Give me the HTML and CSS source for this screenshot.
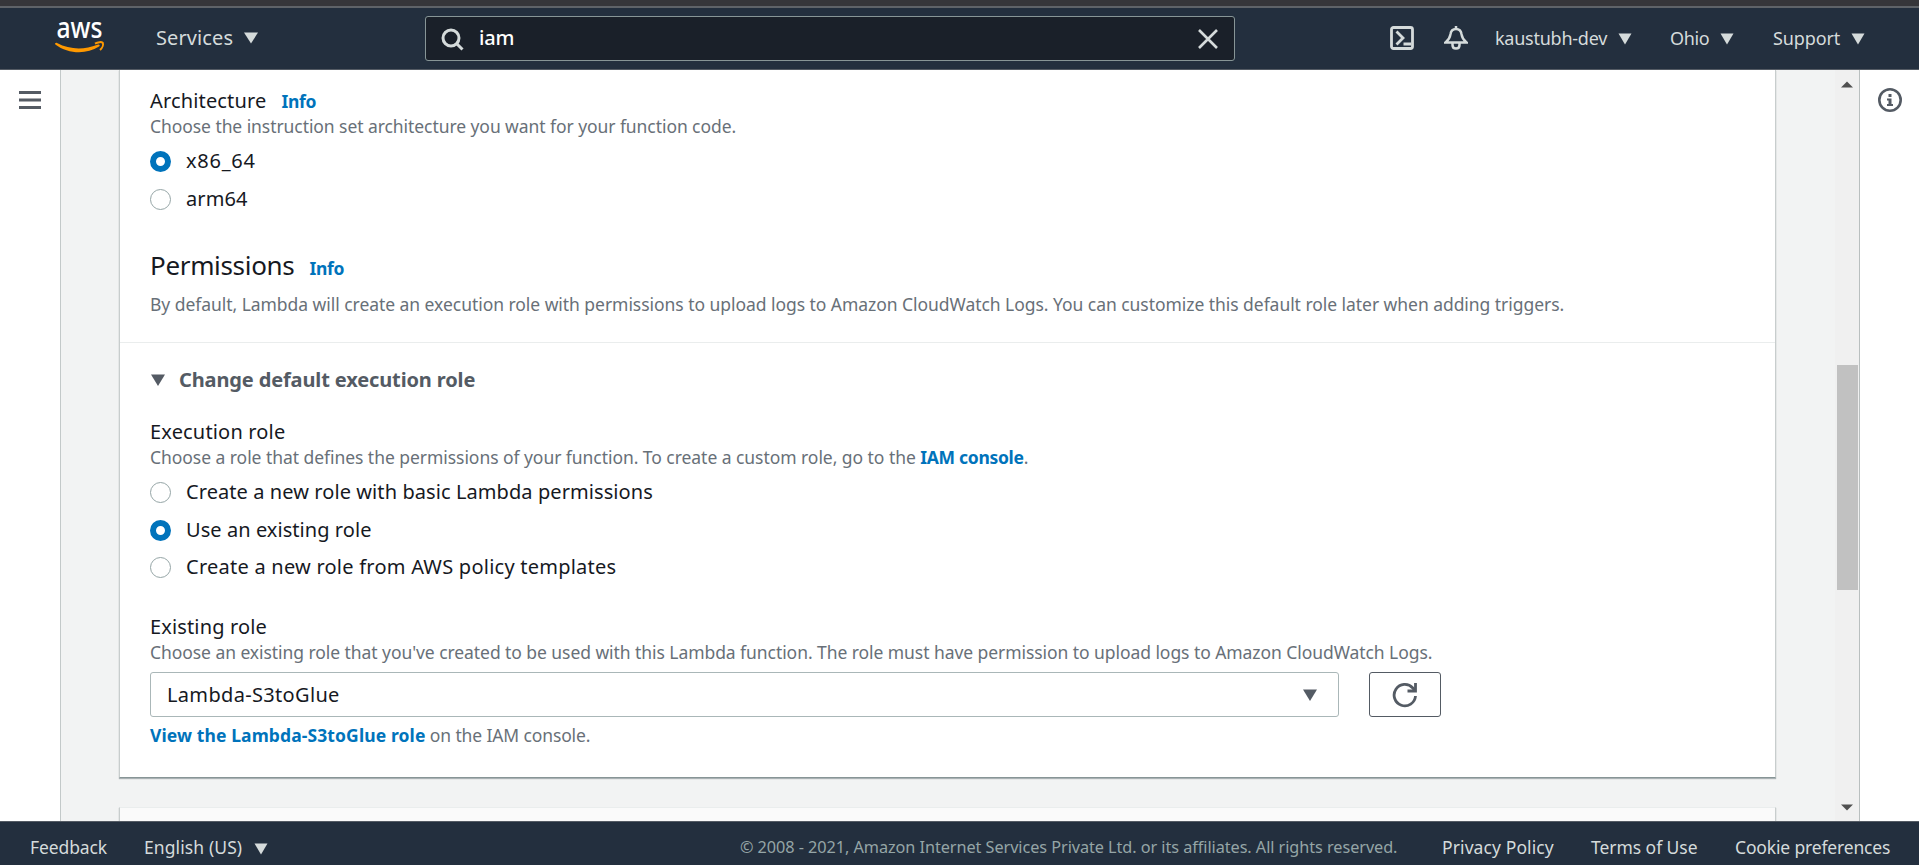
FILE: index.html
```html
<!DOCTYPE html>
<html lang="en">
<head>
<meta charset="utf-8">
<title>Create function - Lambda</title>
<link rel="stylesheet" href="styles.css">
</head>
<body>
<div class="app">
  <div class="browser-edge"></div>
  <header class="topbar">
    <svg class="logo" width="52" height="40" viewBox="0 0 52 40">
      <text class="logo-text" x="2.5" y="20" textLength="46" lengthAdjust="spacingAndGlyphs">aws</text>
      <path class="smile" d="M1 25.500C1.500 24.800 2.300 24.600 3 25C16 31.800 30 32 43.500 26.700C45.500 26 46.500 27.600 45 28.600C32 37 14 36 1.300 26.500Z"/>
      <path class="smile-tip" d="M41 25.600C44 23.800 47.500 23.800 48.800 24.800C49.500 26.500 48.500 29.800 46 32"/>
    </svg>
    <a class="services"><span class="t-services">Services</span><svg class="caret-services" width="16" height="12" viewBox="0 0 16 12"><path d="M1 0.500H15L8 11.500Z"/></svg></a>
    <div class="search">
      <svg class="search-icon" width="24" height="24" viewBox="0 0 24 24"><circle cx="10" cy="10" r="8" /><path d="M15.500 15.500L21.500 21.500"/></svg>
      <span class="t-query">iam</span>
      <svg class="clear-icon" width="20" height="20" viewBox="0 0 20 20"><path d="M1 1L19 19M19 1L1 19"/></svg>
    </div>
    <nav class="account">
      <svg class="line-icon shell-icon" width="24" height="24" viewBox="0 0 24 24"><rect x="1.500" y="1.500" width="21" height="21" rx="2"/><path d="M6.500 5.500L13 12L6.500 18.500M13.500 18H21"/></svg>
      <svg class="line-icon bell-icon" width="24" height="24" viewBox="0 0 24 24"><path d="M12 0V3M1.500 16.500C6 13 6 11 6.500 8C7 4.500 9 3 12 3S17 4.500 17.500 8C18 11 18 13 22.500 16.500Z"/><path d="M8.500 17V19C8.500 23.800 15.500 23.800 15.500 19V17"/></svg>
      <span class="t-user">kaustubh-dev</span><svg class="caret-nav" width="14" height="12" viewBox="0 0 14 12"><path d="M0.500 0.500H13.500L7 11.500Z"/></svg>
      <span class="t-region">Ohio</span><svg class="caret-nav" width="14" height="12" viewBox="0 0 14 12"><path d="M0.500 0.500H13.500L7 11.500Z"/></svg>
      <span class="t-support">Support</span><svg class="caret-nav" width="14" height="12" viewBox="0 0 14 12"><path d="M0.500 0.500H13.500L7 11.500Z"/></svg>
    </nav>
  </header>

  <div class="body">
    <aside class="left-rail">
      <svg width="22" height="18" viewBox="0 0 22 18"><path d="M0 1.500H22M0 9H22M0 16.500H22"/></svg>
    </aside>
    <main class="content">
      <section class="card">
        <div class="permissions">
          <div class="label"><span class="t-arch">Architecture</span><a class="info">Info</a></div>
          <div class="hint"><span class="t-arch-hint">Choose the instruction set architecture you want for your function code.</span></div>
          <div class="radios">
            <div class="option"><i class="radio on"></i><span class="t-x86">x86_64</span></div>
            <div class="option"><i class="radio"></i><span class="t-arm">arm64</span></div>
          </div>
          <h2><span class="t-perm">Permissions</span><a class="info">Info</a></h2>
          <div class="hint"><span class="t-perm-hint">By default, Lambda will create an execution role with permissions to upload logs to Amazon CloudWatch Logs. You can customize this default role later when adding triggers.</span></div>
        </div>
        <div class="role">
          <div class="expander"><svg width="16" height="13" viewBox="0 0 16 13"><path d="M1 0.500H15L8 12Z"/></svg><span class="t-change">Change default execution role</span></div>
          <div class="label"><span class="t-exec">Execution role</span></div>
          <div class="hint"><span class="t-exec-hint">Choose a role that defines the permissions of your function. To create a custom role, go to the </span><a class="t-iam">IAM console</a>.</div>
          <div class="radios">
            <div class="option"><i class="radio"></i><span class="t-opt1">Create a new role with basic Lambda permissions</span></div>
            <div class="option"><i class="radio on"></i><span class="t-opt2">Use an existing role</span></div>
            <div class="option"><i class="radio"></i><span class="t-opt3">Create a new role from AWS policy templates</span></div>
          </div>
          <div class="label existing"><span class="t-exist">Existing role</span></div>
          <div class="hint"><span class="t-exist-hint">Choose an existing role that you've created to be used with this Lambda function. The role must have permission to upload logs to Amazon CloudWatch Logs.</span></div>
          <div class="picker">
            <div class="select"><span class="t-select">Lambda-S3toGlue</span><svg width="16" height="13" viewBox="0 0 16 13"><path d="M1 0.500H15L8 12Z"/></svg></div>
            <div class="refresh"><svg width="26" height="26" viewBox="0 0 26 26"><path d="M23.500 14A10.700 10.700 0 1 1 20.800 6L23 8.500"/><path d="M23.500 1V9H15.500"/></svg></div>
          </div>
          <div class="hint"><a class="t-view">View the Lambda-S3toGlue role</a><span class="t-view-rest"> on the IAM console.</span></div>
        </div>
      </section>
      <section class="card next-card"></section>
    </main>
    <div class="scrollbar">
      <svg width="12" height="7" viewBox="0 0 12 7"><path d="M6 0.500L12 6.500H0Z"/></svg>
      <div class="thumb"></div>
      <svg class="down" width="12" height="7" viewBox="0 0 12 7"><path d="M0 0.500H12L6 6.500Z"/></svg>
    </div>
    <aside class="right-rail">
      <svg width="24" height="24" viewBox="0 0 24 24"><circle cx="12" cy="12" r="10.700"/><path d="M10.500 6h3v3h-3zM9 10.500h4.500v5.500h1.500v2h-6v-2h1.500v-3.500h-1.500z"/></svg>
    </aside>
  </div>

  <footer class="footer">
    <a class="t-feedback">Feedback</a>
    <a class="t-lang">English (US)</a>
    <svg class="caret-lang" width="14" height="12" viewBox="0 0 14 12"><path d="M0.500 0.500H13.500L7 11.500Z"/></svg>
    <span class="t-copy">© 2008 - 2021, Amazon Internet Services Private Ltd. or its affiliates. All rights reserved.</span>
    <a class="t-privacy">Privacy Policy</a>
    <a class="t-terms">Terms of Use</a>
    <a class="t-cookie">Cookie preferences</a>
  </footer>
</div>
</body>
</html>
```
FILE: styles.css
```css
* { box-sizing: border-box; }
body { margin: 0; font-family: "Noto Sans", sans-serif; font-size: 20px; color: #16191f; overflow: hidden; }
svg { display: block; flex: none; }
span, a { white-space: pre; }
.app { width: 1919px; height: 865px; display: flex; flex-direction: column; overflow: hidden; }

.browser-edge { height: 8px; flex: none; background: #36363a; border-bottom: 2px solid #5f6368; }

/* top bar */
.topbar { height: 62px; flex: none; display: flex; background: #232f3e; border-bottom: 1px solid #545b64; color: #d5dbdb; line-height: 30px; padding-left: 54px; }
.logo { margin-top: 10px; overflow: visible; }
.logo-text { font-family: "Noto Sans", sans-serif; font-size: 28.5px; font-weight: 500; fill: #fff; }
.services { display: flex; margin: 15px 0 0 50px; width: 269px; font-size: 20px; }
.t-services { width: 87px; letter-spacing: 0.1px; }
.topbar svg path { fill: #d5dbdb; }
.topbar .logo .smile { fill: #f90; }
.topbar .logo .smile-tip { fill: none; stroke: #f90; stroke-width: 2; }
.caret-services { margin-top: 9px; }
.search { display: flex; margin-top: 8px; width: 810px; height: 45px; background: #1a2029; border: 1px solid #879596; border-radius: 3px; padding-left: 15px; color: #fff; }
.topbar .search-icon, .topbar .clear-icon { fill: none; stroke: #d5dbdb; stroke-width: 3; }
.topbar .clear-icon path { stroke-width: 2.6; }
.search-icon { margin-top: 11px; }
.t-query { margin: 6px 0 0 14px; font-weight: 500; letter-spacing: -0.2px; }
.clear-icon { margin: 12px 16px 0 auto; }
.account { display: flex; font-size: 18px; margin: 15px 0 0 155px; }
.topbar .line-icon path { fill: none; }
.line-icon { fill: none; stroke: #d5dbdb; stroke-width: 2.8; margin-top: 3px; }
.bell-icon { margin: 3px 27px 0 30px; stroke-width: 2.5; }
.caret-nav { margin-top: 10px; }
.t-user { width: 123px; letter-spacing: -0.25px; }
.t-region { width: 50px; margin-left: 38px; letter-spacing: -0.4px; }
.t-support { width: 78px; margin-left: 39px; letter-spacing: -0.1px; }

/* workspace */
.body { flex: 1; min-height: 0; display: flex; }
.left-rail { width: 61px; flex: none; padding: 21px 0 0 19px; border-right: 1px solid #c3c9c9; background: #fff; }
.left-rail path { stroke: #545b64; stroke-width: 3; }
.content { width: 1774px; flex: none; background: #f2f3f3; padding: 0 60px 0 58px; overflow: hidden; }
.card { background: #fff; border: 1px solid #c8cdcd; border-top: 0; border-bottom: 1px solid #879596; width: 1657px; box-shadow: 0 1px 1px rgba(0, 28, 36, 0.3); }
.permissions { height: 273px; padding: 16px 29px 0 30px; border-bottom: 1px solid #eaeded; }
.role { height: 434px; padding: 22px 29px 0 30px; }
.next-card { margin-top: 29px; height: 40px; background: #fafafa; border-top: 1px solid #eaeded; }
.label { line-height: 30px; display: flex; }
.info { font-size: 17.500px; font-weight: 700; color: #0073bb; margin-left: 15px; letter-spacing: -0.3px; }
.hint { font-size: 17.500px; line-height: 22px; color: #687078; display: flex; margin-top: -1px; }
.hint a { font-weight: 700; color: #0073bb; }
.radios { margin-top: 9px; display: flex; flex-direction: column; gap: 7.500px; }
.option { display: flex; line-height: 30px; }
.radio { width: 21px; height: 21px; margin: 5px 15px 0 0; border-radius: 50%; border: 1px solid #95a5a6; }
.radio.on { border: 6px solid #0073bb; }
h2 { margin: 33px 0 8px; font-size: 26px; font-weight: 400; line-height: 36px; display: flex; }
h2 .info { padding-top: 3px; }
.expander { display: flex; line-height: 30px; font-weight: 700; color: #545b64; margin-bottom: 22px; }
.expander svg { margin: 9px 13px 0 0; fill: #545b64; }
.existing { margin-top: 30px; }
.picker { display: flex; gap: 30px; margin: 9px 0 8px; }
.select { width: 1189px; height: 45px; border: 1px solid #aab7b8; border-radius: 3px; display: flex; justify-content: space-between; padding: 7px 20px 0 16px; line-height: 30px; }
.select svg { margin-top: 9px; fill: #545b64; }
.refresh { width: 72px; height: 45px; border: 1px solid #545b64; border-radius: 3px; padding: 9px 0 0 22px; }
.refresh path { fill: none; stroke: #545b64; stroke-width: 2.800; }

/* tracking per run */
.t-arch { letter-spacing: 0.15px; }
.t-arch-hint { letter-spacing: -0.068px; }
.t-x86 { letter-spacing: 0.75px; }
.t-arm { letter-spacing: 0.1px; }
.t-perm { letter-spacing: -0.33px; }
.t-perm-hint { letter-spacing: -0.046px; }
.t-change { letter-spacing: -0.13px; }
.t-exec { letter-spacing: 0.17px; }
.t-exec-hint { letter-spacing: -0.05px; }
.t-iam { letter-spacing: -0.3px; }
.t-opt1 { letter-spacing: 0.08px; }
.t-opt2 { letter-spacing: 0.06px; }
.t-opt3 { letter-spacing: 0.24px; }
.t-exist { letter-spacing: 0.14px; }
.t-exist-hint { letter-spacing: -0.064px; }
.t-select { letter-spacing: 0.33px; }
.t-view { letter-spacing: 0.11px; }
.t-view-rest { letter-spacing: -0.13px; }

.scrollbar { width: 25px; flex: none; background: #f0f0f0; border-right: 1px solid #b9bfbf; padding: 11px 1px 0 2px; }
.scrollbar svg { margin-left: 4px; fill: #505050; }
.thumb { height: 225px; margin-top: 277px; background: #c1c1c1; }
.scrollbar .down { margin-top: 214px; }
.right-rail { flex: 1; background: #fff; padding: 18px 0 0 18px; }
.right-rail circle { fill: none; stroke: #545b64; stroke-width: 2.600; }
.right-rail path { fill: #545b64; }

/* footer */
.footer { height: 44px; flex: none; background: #232f3e; border-top: 1px solid #545b64; display: flex; color: #d5dbdb; font-size: 17.500px; line-height: 24px; padding: 13px 0 0 30px; }
.footer svg { fill: #d5dbdb; margin-top: 8px; }
.t-feedback { width: 114px; letter-spacing: -0.1px; }
.t-lang { width: 110px; letter-spacing: 0.1px; }
.t-copy { width: 702px; margin-left: 472px; color: #95a5a6; font-size: 16.250px; letter-spacing: -0.06px; }
.t-privacy { width: 149px; letter-spacing: 0.1px; }
.t-terms { width: 144px; letter-spacing: -0.05px; }
.t-cookie { letter-spacing: -0.16px; }

/* the first group sits slightly lower than the role group */
.permissions .radios { margin-top: 9px; gap: 7.500px; }
.permissions h2 { margin-bottom: 8.500px; }
```
